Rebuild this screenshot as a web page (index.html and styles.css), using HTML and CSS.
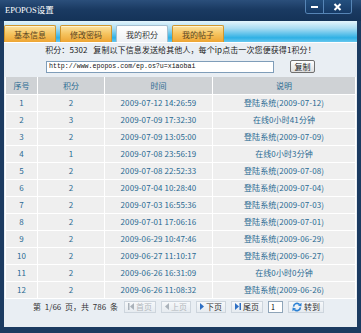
FILE: index.html
```html
<!DOCTYPE html>
<html lang="zh-CN">
<head>
    <meta charset="UTF-8">
    <title>EPOPOS设置</title>
    <link rel="stylesheet" href="styles.css">
</head>
<body>
    <div class="window">
        <!-- 标题栏 -->
        <div class="titlebar">
            <span class="title">EPOPOS设置</span>
            <div class="win-btns">
                <span class="win-btn min"><i></i></span>
                <span class="win-btn close">
                    <svg width="9" height="8" viewBox="0 0 9 8"><path d="M1.5 1 L7.5 7 M7.5 1 L1.5 7" stroke="#fff" stroke-width="2"/></svg>
                </span>
            </div>
        </div>

        <!-- 选项卡 -->
        <div class="tabs">
            <span class="tab">基本信息</span>
            <span class="tab">修改密码</span>
            <span class="tab active">我的积分</span>
            <span class="tab">我的帖子</span>
        </div>

        <div class="content">
            <p class="notice">积分：5302&nbsp;&nbsp;&nbsp;复制以下信息发送给其他人，每个ip点击一次您便获得1积分！</p>
            <div class="link-row">
                <input class="link-input" type="text" value="http://www.epopos.com/ep.os?u=xiaobai">
                <button class="copy-btn">复制</button>
            </div>

            <table class="score-table">
                <colgroup>
                    <col class="c-no"><col class="c-score"><col class="c-time"><col>
                </colgroup>
                <thead>
                    <tr><th>序号</th><th>积分</th><th>时间</th><th>说明</th></tr>
                </thead>
                <tbody>
                    <tr><td>1</td><td>2</td><td>2009-07-12 14:26:59</td><td>登陆系统(2009-07-12)</td></tr>
                    <tr><td>2</td><td>3</td><td>2009-07-09 17:32:30</td><td>在线0小时41分钟</td></tr>
                    <tr><td>3</td><td>2</td><td>2009-07-09 13:05:00</td><td>登陆系统(2009-07-09)</td></tr>
                    <tr><td>4</td><td>1</td><td>2009-07-08 23:56:19</td><td>在线0小时3分钟</td></tr>
                    <tr><td>5</td><td>2</td><td>2009-07-08 22:52:33</td><td>登陆系统(2009-07-08)</td></tr>
                    <tr><td>6</td><td>2</td><td>2009-07-04 10:28:40</td><td>登陆系统(2009-07-04)</td></tr>
                    <tr><td>7</td><td>2</td><td>2009-07-03 16:55:36</td><td>登陆系统(2009-07-03)</td></tr>
                    <tr><td>8</td><td>2</td><td>2009-07-01 17:06:16</td><td>登陆系统(2009-07-01)</td></tr>
                    <tr><td>9</td><td>2</td><td>2009-06-29 10:47:46</td><td>登陆系统(2009-06-29)</td></tr>
                    <tr><td>10</td><td>2</td><td>2009-06-27 11:10:17</td><td>登陆系统(2009-06-27)</td></tr>
                    <tr><td>11</td><td>2</td><td>2009-06-26 16:31:09</td><td>在线0小时0分钟</td></tr>
                    <tr><td>12</td><td>2</td><td>2009-06-26 11:08:32</td><td>登陆系统(2009-06-26)</td></tr>
                </tbody>
            </table>

            <!-- 分页 -->
            <div class="pager">
                <span class="pager-info">第 1/66 页，共 786 条</span>
                <span class="pg-btn disabled">
                    <svg width="6" height="7" viewBox="0 0 6 7"><rect x="0" y="0" width="1.5" height="7" fill="#aab2ba"/><path d="M6 0 L2 3.5 L6 7 Z" fill="#aab2ba"/></svg>首页
                </span>
                <span class="pg-btn disabled">
                    <svg width="4" height="7" viewBox="0 0 4 7"><path d="M4 0 L0 3.5 L4 7 Z" fill="#aab2ba"/></svg>上页
                </span>
                <span class="pg-btn">
                    <svg width="4" height="7" viewBox="0 0 4 7"><path d="M0 0 L4 3.5 L0 7 Z" fill="#2e6fc4"/></svg>下页
                </span>
                <span class="pg-btn">
                    <svg width="6" height="7" viewBox="0 0 6 7"><path d="M0 0 L4 3.5 L0 7 Z" fill="#2e6fc4"/><rect x="4.5" y="0" width="1.5" height="7" fill="#2e6fc4"/></svg>尾页
                </span>
                <input class="pg-input" type="text" value="1">
                <span class="pg-btn">
                    <svg width="10" height="10" viewBox="0 0 10 10">
                        <path d="M1.6 4.6 A3.4 3.4 0 0 1 7.6 2.6" fill="none" stroke="#2a80d4" stroke-width="1.6"/>
                        <path d="M9.6 0.8 L9.4 4.4 L6 3.4 Z" fill="#2a80d4"/>
                        <path d="M8.4 5.4 A3.4 3.4 0 0 1 2.4 7.4" fill="none" stroke="#2a80d4" stroke-width="1.6"/>
                        <path d="M0.4 9.2 L0.6 5.6 L4 6.6 Z" fill="#2a80d4"/>
                    </svg>转到
                </span>
            </div>
        </div>
    </div>
</body>
</html>
```

FILE: styles.css
```css
* {
    margin: 0;
    padding: 0;
    box-sizing: border-box;
}

body {
    width: 361px;
    height: 333px;
    font-family: "Noto Sans CJK SC", "Noto Sans", sans-serif;
    font-size: 8px;
    color: #222;
}

.window {
    width: 361px;
    height: 333px;
    display: flex;
    flex-direction: column;
    background: #1c3b61;
    padding-bottom: 6px;
}

/* 标题栏 */
.titlebar {
    height: 21px;
    display: flex;
    justify-content: space-between;
    align-items: flex-start;
    padding: 0 9px 0 5px;
    background: linear-gradient(#2b4f7b, #1a3a62 45%, #143358);
}

.title {
    line-height: 21px;
    color: #fff;
    font-family: "Liberation Serif", "Noto Sans CJK SC", serif;
    font-size: 8.5px;
}

.win-btns {
    display: flex;
    height: 14px;
    border: 1px solid #5685b6;
    border-top: none;
    border-radius: 0 0 3px 3px;
    overflow: hidden;
}

.win-btn {
    display: flex;
    align-items: center;
    justify-content: center;
    background: linear-gradient(#24507f, #163a66);
}

.win-btn.min {
    width: 18px;
    border-right: 1px solid #5685b6;
}

.win-btn.min i {
    width: 7px;
    height: 2px;
    background: #fff;
}

.win-btn.close {
    width: 27px;
}

/* 选项卡 */
.tabs {
    height: 22px;
    margin: 0 4px;
    display: flex;
    align-items: flex-end;
    gap: 4px;
    background: linear-gradient(#e4f5fc, #aadcf2 35%, #2fb1e5 80%, #67c7ee);
    border-bottom: 1px solid #fff;
}

.tab {
    width: 52px;
    height: 17px;
    display: flex;
    align-items: center;
    justify-content: center;
    color: #5a4422;
    border: 1px solid #d0972f;
    border-bottom: none;
    border-radius: 2px 2px 0 0;
    background: linear-gradient(#fbe3a2, #f5c35e 50%, #eea533);
    box-shadow: inset 0 1px 0 #fff3cf;
}

.tab.active {
    color: #333;
    border-color: #a6bfd0;
    background: linear-gradient(#ffffff, #eef1f4);
    box-shadow: none;
}

/* 内容区 */
.content {
    flex: 1;
    margin: 0 4px;
    padding: 0 1px;
    display: flex;
    flex-direction: column;
    background: #e9eef3;
}

.notice {
    height: 13px;
    line-height: 13px;
    text-align: center;
    color: #1a1a1a;
    letter-spacing: 0.1px;
}

.link-row {
    display: flex;
    justify-content: center;
    align-items: center;
    gap: 16px;
    padding: 4px 0 4px;
}

.link-input {
    width: 228px;
    height: 12px;
    padding-left: 2px;
    border: 1px solid #7f9db9;
    background: #fff;
    font-family: "Liberation Mono", monospace;
    font-size: 6.6px;
    color: #111;
    outline: none;
}

.copy-btn {
    width: 25px;
    height: 13px;
    border: 1px solid #707070;
    border-radius: 2px;
    background: linear-gradient(#ffffff, #dedede);
    font-family: "Noto Sans CJK SC", sans-serif;
    font-size: 8px;
    color: #222;
}

/* 积分表 */
.score-table {
    width: 351px;
    border-collapse: collapse;
    table-layout: fixed;
    color: #2a6a92;
}

.c-no { width: 32px; }
.c-score { width: 67px; }
.c-time { width: 108px; }

.score-table th,
.score-table td {
    height: 17px;
    padding: 0;
    text-align: center;
    border: 1px solid #fff;
    white-space: nowrap;
    font-weight: normal;
}

.score-table th {
    background: #cfd2d5;
    border-top: none;
}

.score-table td {
    background: #efefef;
    letter-spacing: 0.1px;
}

/* 分页 */
.pager {
    display: flex;
    justify-content: center;
    align-items: center;
    padding-top: 2px;
    margin-left: -4px;
    gap: 5px;
    color: #333;
}

.pager-info {
    word-spacing: 2px;
    margin-right: 1px;
}

.pg-btn {
    height: 12px;
    display: flex;
    align-items: center;
    gap: 2px;
    padding: 0 3px;
    border: 1px solid #cdd5dd;
    background: linear-gradient(#f6f8fa, #e6ebf0);
    color: #333;
}

.pg-btn.disabled {
    color: #b2b7bc;
}

.pg-input {
    width: 15px;
    height: 12px;
    border: 1px solid #8ea4b8;
    background: #fff;
    font-family: "Noto Sans CJK SC", sans-serif;
    font-size: 7px;
    padding-left: 2px;
    outline: none;
}
```
